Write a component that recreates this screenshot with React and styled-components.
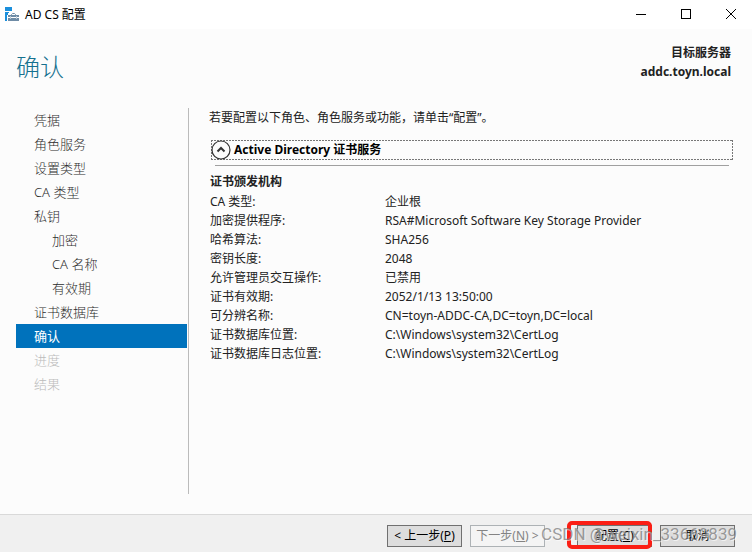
import { useState } from "react";
import styled, { createGlobalStyle } from "styled-components";

const steps = [
  { label: "凭据" },
  { label: "角色服务" },
  { label: "设置类型" },
  { label: "CA 类型" },
  { label: "私钥" },
  { label: "加密", nested: true },
  { label: "CA 名称", nested: true },
  { label: "有效期", nested: true },
  { label: "证书数据库" },
  { label: "确认", current: true },
  { label: "进度", disabled: true },
  { label: "结果", disabled: true },
];

const settings = [
  ["CA 类型:", "企业根"],
  ["加密提供程序:", "RSA#Microsoft Software Key Storage Provider"],
  ["哈希算法:", "SHA256"],
  ["密钥长度:", "2048"],
  ["允许管理员交互操作:", "已禁用"],
  ["证书有效期:", "2052/1/13 13:50:00"],
  ["可分辨名称:", "CN=toyn-ADDC-CA,DC=toyn,DC=local"],
  ["证书数据库位置:", "C:\\Windows\\system32\\CertLog"],
  ["证书数据库日志位置:", "C:\\Windows\\system32\\CertLog"],
];

export default function App() {
  const [open, setOpen] = useState(true);

  return (
    <Window>
      <GlobalStyle />
      <TitleBar>
        <AppIcon />
        <Caption>AD CS 配置</Caption>
        <CaptionButton aria-label="最小化">
          <svg width="12" height="12" stroke="#000" shapeRendering="crispEdges">
            <path d="M1 6.5h10" />
          </svg>
        </CaptionButton>
        <CaptionButton aria-label="最大化">
          <svg width="12" height="12" stroke="#000" fill="none" shapeRendering="crispEdges">
            <path d="M1.5 1.5h9v9h-9z" />
          </svg>
        </CaptionButton>
        <CaptionButton aria-label="关闭">
          <svg width="12" height="12" stroke="#000">
            <path d="M1 1l10 10M11 1L1 11" />
          </svg>
        </CaptionButton>
      </TitleBar>

      <Header>
        <Title>确认</Title>
        <Server>
          <p>目标服务器</p>
          <p>addc.toyn.local</p>
        </Server>
      </Header>

      <Body>
        <Nav>
          {steps.map((step) => (
            <Step
              key={step.label}
              href={step.disabled ? undefined : "#"}
              $nested={step.nested}
              $current={step.current}
              $disabled={step.disabled}
              aria-current={step.current ? "step" : undefined}
            >
              {step.label}
            </Step>
          ))}
        </Nav>
        <Content>
          <Intro>若要配置以下角色、角色服务或功能，请单击“配置”。</Intro>
          <Expander aria-expanded={open} onClick={() => setOpen(!open)}>
            <svg width="20" height="20" fill="none" stroke="#333">
              <circle cx="10" cy="10" r="9" fill="#fcfcfc" strokeWidth="1.2" />
              <path d="M6.5 11.5L10 8l3.5 3.5" strokeWidth="2" />
            </svg>
            Active Directory 证书服务
          </Expander>
          <Rule />
          {open && (
            <>
              <SectionTitle>证书颁发机构</SectionTitle>
              <Settings>
                <tbody>
                  {settings.map(([name, value]) => (
                    <tr key={name}>
                      <th scope="row">{name}</th>
                      <td>{value}</td>
                    </tr>
                  ))}
                </tbody>
              </Settings>
            </>
          )}
        </Content>
      </Body>

      <Footer>
        <ButtonPair>
          <Button>
            &lt; 上一步(<u>P</u>)
          </Button>
          <Button disabled>
            下一步(<u>N</u>) &gt;
          </Button>
        </ButtonPair>
        <ButtonPair>
          <Marked>
            <Button>
              配置(<u>C</u>)
            </Button>
          </Marked>
          <Button>取消</Button>
        </ButtonPair>
        <Watermark>CSDN @weixin_33669839</Watermark>
      </Footer>
    </Window>
  );
}

// server rack with a toolbox in front of it
function AppIcon() {
  return (
    <svg width="16" height="16" viewBox="0 0 16 16">
      <path fill="#1b8fdc" d="M0 0h7v4H0zM0 5h4v9H0z" />
      <path fill="#fff" d="M3 6h11v2H3zM2 8h2v6H2z" />
      <path fill="none" stroke="#6f8ca6" d="M6.5 8.5v-1l1-1h2l1 1v1" />
      <path fill="#6f8ca6" d="M3 8h11v6H3z" />
      <path fill="#fff" d="M3 10h11v1H3z" />
      <path fill="#b9c9d6" d="M5 9h1v3H5zM11 9h1v3h-1z" />
    </svg>
  );
}

const GlobalStyle = createGlobalStyle`
  * {
    box-sizing: border-box;
  }
  body {
    margin: 0;
    background: #fcfcfc;
    color: #222;
    font: 12px/20px "Noto Sans", "Noto Sans CJK SC", sans-serif;
  }
  p, h1, h2 {
    margin: 0;
  }
  button {
    font: inherit;
    color: inherit;
  }
`;

const Window = styled.div`
  display: flex;
  flex-direction: column;
  min-height: 100vh;
`;

const TitleBar = styled.header`
  display: flex;
  align-items: center;
  height: 29px;
  padding-left: 5px;
  background: #fff;
  color: #000;
`;

const Caption = styled.span`
  flex: 1;
  padding-left: 4px;
`;

const CaptionButton = styled.button`
  display: flex;
  align-items: center;
  justify-content: center;
  width: 45px;
  height: 28px;
  padding: 0 0 2px 3px;
  border: 0;
  background: none;
`;

const Header = styled.div`
  display: flex;
  justify-content: space-between;
  height: 79px;
  padding: 14px 21px 0 16px;
`;

const Title = styled.h1`
  color: #16718f;
  font-size: 24px;
  font-weight: 300;
  line-height: 48px;
`;

const Server = styled.div`
  font-weight: 700;
  line-height: 19px;
  text-align: right;
`;

const Body = styled.main`
  flex: 1;
  display: flex;
  padding: 0 19px 20px 16px;
`;

const Nav = styled.nav`
  flex: 0 0 173px;
  padding-right: 1px;
  border-right: 1px solid #bbb;
`;

const Step = styled.a`
  display: block;
  padding-left: ${(p) => (p.$nested ? 36 : 18)}px;
  background: ${(p) => (p.$current ? "#0072bc" : "none")};
  color: ${(p) => (p.$current ? "#fff" : p.$disabled ? "#bbb" : "#2c2c2c")};
  font-size: 13px;
  font-weight: ${(p) => (p.$current ? 400 : 300)};
  line-height: 24px;
  text-decoration: none;
`;

const Content = styled.section`
  flex: 1;
  padding-left: 20px;
`;

const Intro = styled.p`
  padding-bottom: 12px;
`;

const Expander = styled.button`
  --dash: #777 0 2px, transparent 2px 3px;
  display: flex;
  align-items: center;
  gap: 3px;
  width: calc(100% - 2px);
  height: 20px;
  margin-left: 2px;
  padding: 0;
  border: 0;
  background:
    repeating-linear-gradient(90deg, var(--dash)) top / 100% 1px no-repeat,
    repeating-linear-gradient(90deg, var(--dash)) bottom / 100% 1px no-repeat,
    repeating-linear-gradient(var(--dash)) left / 1px 100% no-repeat,
    repeating-linear-gradient(var(--dash)) right / 1px 100% no-repeat;
  color: #000;
  font-weight: 700;

  svg {
    flex: none;
  }
`;

const Rule = styled.hr`
  height: 1px;
  margin: 5px 4px 6px 6px;
  border: 0;
  background: #a0a0a0;
`;

const SectionTitle = styled.h2`
  padding-left: 1px;
  font-size: 12px;
  line-height: 20px;
`;

const Settings = styled.table`
  width: 100%;
  border-collapse: collapse;
  line-height: 19px;

  th {
    width: 176px;
    padding: 0 0 0 1px;
    font-weight: 400;
    text-align: left;
  }
  td {
    padding: 0;
  }
`;

const Footer = styled.footer`
  position: relative;
  display: flex;
  justify-content: flex-end;
  gap: 32px;
  padding: 10px 17px 5px;
  border-top: 1px solid #d9d9d9;
  background: #f0f0f0;
`;

const ButtonPair = styled.div`
  display: flex;
  gap: 8px;
`;

const Button = styled.button`
  width: 75px;
  height: 22px;
  padding: 0;
  border: 1px solid #707070;
  background: #ddd;
  color: #000;
  line-height: 20px;
  white-space: nowrap;

  &:disabled {
    border-color: #adb2b5;
    background: #f4f4f4;
    color: #838383;
  }
`;

const Marked = styled.div`
  position: relative;

  &::after {
    content: "";
    position: absolute;
    inset: -4px 0 -2px -10px;
    border: 4px solid #fb1e14;
    border-radius: 5px;
    pointer-events: none;
  }
`;

const Watermark = styled.span`
  position: absolute;
  right: 15px;
  bottom: 8px;
  color: rgba(125, 125, 125, 0.75);
  font: 17px/20px Roboto, "Liberation Sans", sans-serif;
  text-shadow: 1px 1px rgba(255, 255, 255, 0.6);
  pointer-events: none;
`;
